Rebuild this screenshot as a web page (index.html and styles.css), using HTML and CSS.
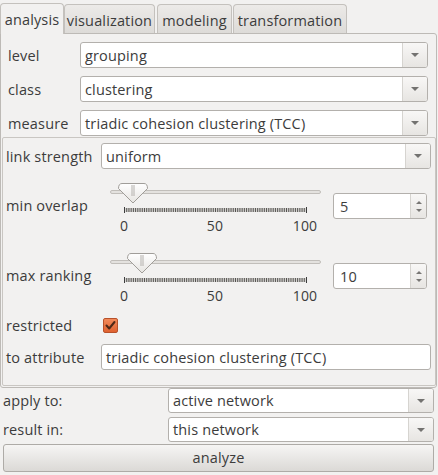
FILE: index.html
```html
<!DOCTYPE html>
<html>
<head>
<meta charset="utf-8">
<link rel="stylesheet" href="styles.css">
</head>
<body>
<div class="tabs">
  <div class="tab tab-analysis active">analysis</div>
  <div class="tab tab-visualization">visualization</div>
  <div class="tab tab-modeling">modeling</div>
  <div class="tab tab-transformation">transformation</div>
</div>
<div class="pane">
  <div class="form-row">
    <span class="label">level</span>
    <div class="combo"><span class="combo-text">grouping</span><span class="combo-btn"><span class="arrow-down"></span></span></div>
  </div>
  <div class="form-row">
    <span class="label">class</span>
    <div class="combo"><span class="combo-text">clustering</span><span class="combo-btn"><span class="arrow-down"></span></span></div>
  </div>
  <div class="form-row">
    <span class="label">measure</span>
    <div class="combo"><span class="combo-text">triadic cohesion clustering (TCC)</span><span class="combo-btn"><span class="arrow-down"></span></span></div>
  </div>
  <div class="frame">
    <div class="link-row">
      <span class="label label-wide">link strength</span>
      <div class="combo"><span class="combo-text">uniform</span><span class="combo-btn"><span class="arrow-down"></span></span></div>
    </div>
    <div class="slider-row">
      <span class="slider-label">min overlap</span>
      <svg class="slider" width="212" height="60" viewBox="0 0 212 60">
        <defs>
          <linearGradient id="hg1" x1="0" y1="0" x2="0" y2="1">
            <stop offset="0" stop-color="#ffffff"/>
            <stop offset="1" stop-color="#e6e4e1"/>
          </linearGradient>
        </defs>
        <rect x="0.5" y="9.5" width="210" height="3" rx="1.5" class="groove"/>
        <line x1="14" y1="29" x2="196.8" y2="29" class="ticks"/>
        <line x1="14.5" y1="26" x2="14.5" y2="32" class="tick-end"/>
        <line x1="196.5" y1="26" x2="196.5" y2="32" class="tick-end"/>
        <path d="M12 2.5 H34 Q37.5 2.5 37.5 7.5 L23 22 L8.5 7.5 Q8.5 2.5 12 2.5 Z" fill="url(#hg1)" class="handle"/>
        <line x1="22" y1="4" x2="22" y2="15" class="grip"/>
        <line x1="24" y1="4" x2="24" y2="15" class="grip"/>
        <text x="14" y="50" class="tick-label">0</text>
        <text x="105" y="50" class="tick-label">50</text>
        <text x="195" y="50" class="tick-label">100</text>
      </svg>
      <div class="spin"><span class="spin-text">5</span><span class="spin-btns"><span class="arrow-up-s"></span><span class="arrow-down-s"></span></span></div>
    </div>
    <div class="slider-row slider-row-next">
      <span class="slider-label">max ranking</span>
      <svg class="slider" width="212" height="60" viewBox="0 0 212 60">
        <defs>
          <linearGradient id="hg2" x1="0" y1="0" x2="0" y2="1">
            <stop offset="0" stop-color="#ffffff"/>
            <stop offset="1" stop-color="#e6e4e1"/>
          </linearGradient>
        </defs>
        <rect x="0.5" y="9.5" width="210" height="3" rx="1.5" class="groove"/>
        <line x1="14" y1="29" x2="196.8" y2="29" class="ticks"/>
        <line x1="14.5" y1="26" x2="14.5" y2="32" class="tick-end"/>
        <line x1="196.5" y1="26" x2="196.5" y2="32" class="tick-end"/>
        <path d="M21 2.5 H43 Q46.5 2.5 46.5 7.5 L32 22 L17.5 7.5 Q17.5 2.5 21 2.5 Z" fill="url(#hg2)" class="handle"/>
        <line x1="31" y1="4" x2="31" y2="15" class="grip"/>
        <line x1="33" y1="4" x2="33" y2="15" class="grip"/>
        <text x="14" y="50" class="tick-label">0</text>
        <text x="105" y="50" class="tick-label">50</text>
        <text x="195" y="50" class="tick-label">100</text>
      </svg>
      <div class="spin"><span class="spin-text">10</span><span class="spin-btns"><span class="arrow-up-s"></span><span class="arrow-down-s"></span></span></div>
    </div>
    <div class="check-row">
      <span class="label label-check">restricted</span>
      <span class="checkbox"><svg width="13" height="13" viewBox="0 0 13 13"><path d="M2.5 6.5 L5.2 9.5 L10.5 3" class="check"/></svg></span>
    </div>
    <div class="attr-row">
      <span class="label label-wide">to attribute</span>
      <div class="field">triadic cohesion clustering (TCC)</div>
    </div>
  </div>
</div>
<div class="footer-row">
  <span class="label label-footer">apply to:</span>
  <div class="combo"><span class="combo-text">active network</span><span class="combo-btn"><span class="arrow-down"></span></span></div>
</div>
<div class="footer-row footer-row-next">
  <span class="label label-footer">result in:</span>
  <div class="combo"><span class="combo-text">this network</span><span class="combo-btn"><span class="arrow-down"></span></span></div>
</div>
<button class="analyze">analyze</button>
</body>
</html>
```

FILE: styles.css
```css
* { box-sizing: border-box; }
html, body { margin: 0; padding: 0; }
body {
  background: #f2f1f0;
  font-family: "Open Sans", sans-serif;
  font-size: 14.5px;
  letter-spacing: 0.15px;
  color: #3c3c3c;
  width: 438px;
  height: 475px;
  overflow: hidden;
}

/* tabs */
.tabs {
  display: flex;
  align-items: flex-end;
  height: 34px;
  position: relative;
  z-index: 2;
}
.tab {
  height: 29px;
  margin-bottom: 1px;
  display: flex;
  align-items: center;
  justify-content: center;
  padding-top: 2px;
  border: 1px solid #c4c1bd;
  border-bottom: none;
  border-radius: 4px 4px 0 0;
  background: linear-gradient(#eceae8, #dddbd8);
  white-space: nowrap;
}
.tab.active {
  height: 31px;
  margin-bottom: 0;
  background: #f2f1f0;
  padding-top: 1px;
}
.tab-analysis { width: 64px; }
.tab-visualization { width: 91px; }
.tab-modeling { width: 75px; margin-left: 2px; }
.tab-transformation { width: 114px; margin-left: 1px; }

/* pane */
.pane {
  position: relative;
  z-index: 1;
  margin-top: -1px;
  width: 437px;
  height: 355px;
  border: 1px solid #bdbab6;
  border-radius: 0 3px 3px 3px;
  padding: 0 8px 0 7px;
}
.form-row {
  display: flex;
  align-items: center;
  height: 26px;
  margin-top: 8px;
}
.label {
  flex: none;
  width: 72px;
  white-space: nowrap;
}
.label-wide { width: 95px; }
.label-check { width: 97px; }
.label-footer { width: 165px; }

.combo {
  flex: 1;
  height: 100%;
  display: flex;
  background: #fff;
  border: 1px solid #b3b0ac;
  border-radius: 3px;
  overflow: hidden;
}
.combo-text {
  flex: 1;
  padding-left: 4px;
  display: flex;
  align-items: center;
  white-space: nowrap;
  overflow: hidden;
}
.combo-btn {
  flex: none;
  width: 25px;
  border-left: 1px solid #d6d4d0;
  background: linear-gradient(#f8f7f6, #e7e5e2);
  display: flex;
  align-items: center;
  justify-content: center;
}
.arrow-down {
  width: 0;
  height: 0;
  border-left: 4px solid transparent;
  border-right: 4px solid transparent;
  border-top: 4px solid #737270;
}

/* inner frame */
.frame {
  margin: 1px -8px 0 -6px;
  height: 249px;
  border: 1px solid #c9c6c2;
  border-radius: 2px;
  padding: 5px 4px 0 3px;
}
.link-row {
  display: flex;
  align-items: center;
  height: 26px;
}
.slider-row {
  display: flex;
  align-items: flex-start;
  height: 60px;
  margin-top: 12px;
}
.slider-row-next { margin-top: 10px; }
.slider-label {
  flex: none;
  width: 104px;
  margin-top: 16px;
  line-height: 18px;
  white-space: nowrap;
}
.slider { flex: none; display: block; }
.groove { fill: #e4e2df; stroke: #c1beba; }
.ticks { stroke: #55534f; stroke-width: 4; stroke-dasharray: 1 0.82; }
.tick-end { stroke: #3c3c3c; stroke-width: 1; }
.handle { stroke: #a09d99; stroke-width: 1; }
.grip { stroke: #b3b0ac; stroke-width: 1; }
.tick-label { fill: #3c3c3c; font-size: 14px; text-anchor: middle; }

.spin {
  flex: none;
  display: flex;
  width: 94px;
  height: 26px;
  margin-left: 11px;
  margin-top: 12px;
  background: #fff;
  border: 1px solid #b3b0ac;
  border-radius: 3px;
  overflow: hidden;
}
.spin-text {
  flex: 1;
  padding-left: 6px;
  display: flex;
  align-items: center;
}
.spin-btns {
  flex: none;
  width: 16px;
  border-left: 1px solid #d6d4d0;
  background: linear-gradient(#f8f7f6, #e7e5e2);
  display: flex;
  flex-direction: column;
  align-items: center;
  justify-content: center;
  gap: 5px;
}
.arrow-up-s {
  width: 0;
  height: 0;
  border-left: 3px solid transparent;
  border-right: 3px solid transparent;
  border-bottom: 3px solid #787674;
}
.arrow-down-s {
  width: 0;
  height: 0;
  border-left: 3px solid transparent;
  border-right: 3px solid transparent;
  border-top: 3px solid #787674;
}

.check-row {
  display: flex;
  align-items: center;
  height: 15px;
  margin-top: 7px;
}
.checkbox {
  flex: none;
  width: 15px;
  height: 15px;
  border: 1px solid #b8512a;
  border-radius: 2px;
  background: linear-gradient(#f28a5a, #df6230);
  display: flex;
}
.check { fill: none; stroke: #4e2817; stroke-width: 2; stroke-linecap: round; stroke-linejoin: round; }

.attr-row {
  display: flex;
  align-items: center;
  height: 26px;
  margin-top: 11px;
}
.field {
  flex: 1;
  height: 100%;
  background: #fff;
  border: 1px solid #b3b0ac;
  border-radius: 3px;
  padding-left: 4px;
  display: flex;
  align-items: center;
  white-space: nowrap;
}

/* footer */
.footer-row {
  display: flex;
  align-items: center;
  height: 25px;
  padding: 0 4px 0 3px;
}
.footer-row-next { margin-top: 4px; }
.analyze {
  display: block;
  margin: 2px 4px 0 3px;
  width: 431px;
  height: 28px;
  border: 1px solid #aeaba7;
  border-radius: 3px;
  background: linear-gradient(#f6f5f4, #dbd9d6);
  font-family: inherit;
  font-size: inherit;
  letter-spacing: inherit;
  color: #3c3c3c;
  padding: 0 0 2px 0;
}
```
